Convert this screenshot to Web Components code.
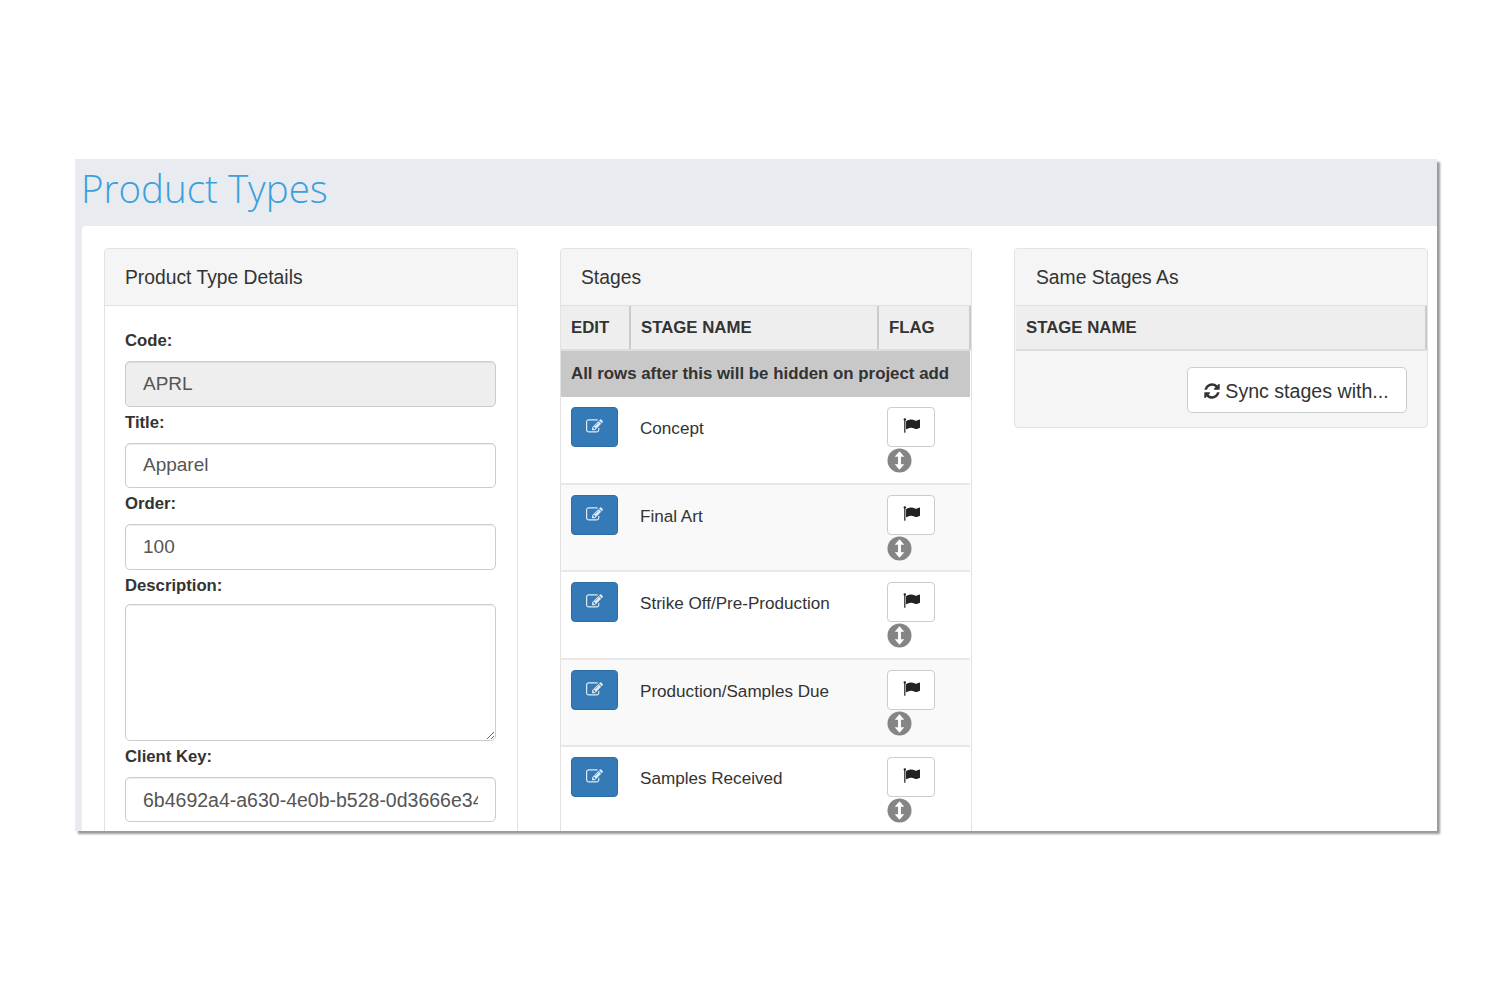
<!DOCTYPE html>
<html lang="en"><head><meta charset="utf-8"><title>Product Types</title>
<style>
html,body{margin:0;background:#fff}
body{padding:159px 0 0 75px;height:841px;box-sizing:border-box;overflow:hidden;font:19px/20px "Liberation Sans",Arial,sans-serif;color:#333}
</style></head><body>
<pt-window heading="Product Types">
  <pt-panel heading="Product Type Details">
    <pt-form>
      <pt-field label="Code:" value="APRL" disabled></pt-field>
      <pt-field label="Title:" value="Apparel"></pt-field>
      <pt-field label="Order:" value="100"></pt-field>
      <pt-field label="Description:" multiline></pt-field>
      <pt-field label="Client Key:" value="6b4692a4-a630-4e0b-b528-0d3666e34f21" wide></pt-field>
    </pt-form>
  </pt-panel>
  <pt-panel heading="Stages">
    <pt-table-head cols="70px 248px 92px" labels="EDIT|STAGE NAME|FLAG"></pt-table-head>
    <pt-notice>All rows after this will be hidden on project add</pt-notice>
    <pt-stage-row>Concept</pt-stage-row>
    <pt-stage-row alt>Final Art</pt-stage-row>
    <pt-stage-row>Strike Off/Pre-Production</pt-stage-row>
    <pt-stage-row alt>Production/Samples Due</pt-stage-row>
    <pt-stage-row>Samples Received</pt-stage-row>
  </pt-panel>
  <pt-panel heading="Same Stages As" filled indent="21">
    <pt-table-head cols="1fr" labels="STAGE NAME" inset></pt-table-head>
    <pt-sync-bar>Sync stages with...</pt-sync-bar>
  </pt-panel>
</pt-window>
<script>
const ICONS={
 edit:'M888 1184l116-116-152-152-116 116v56h96v96h56zm440-720q-16-16-33 1l-350 350q-17 17-1 33t33-1l350-350q17-17 1-33zm80 594v190q0 119-84.5 203.5t-203.5 84.5h-832q-119 0-203.5-84.5t-84.5-203.5v-832q0-119 84.5-203.5t203.5-84.5h832q63 0 117 25 15 7 18 23 3 17-9 29l-49 49q-14 14-32 8-23-6-45-6h-832q-66 0-113 47t-47 113v832q0 66 47 113t113 47h832q66 0 113-47t47-113v-126q0-13 9-22l64-64q15-15 35-7t20 29zm-96-738l288 288-672 672h-288v-288zm444 132l-92 92-288-288 92-92q28-28 68-28t68 28l152 152q28 28 28 68t-28 68z',
 flag:'M320 256q0 72-64 110v1266q0 13-9.5 22.5t-22.5 9.5h-64q-13 0-22.5-9.5t-9.5-22.5v-1266q-64-38-64-110 0-53 37.5-90.5t90.5-37.5 90.5 37.5 37.5 90.5zm1472 64v763q0 25-12.5 38.5t-39.5 27.5q-215 116-369 116-61 0-123.5-22t-108.5-48-115.5-48-142.5-22q-192 0-464 146-17 9-33 9-26 0-45-19t-19-45v-742q0-32 31-55 21-14 79-43 236-120 421-120 107 0 200 29t219 88q38 19 88 19 54 0 117.5-21t110-47 88-47 54.5-21q26 0 45 19t19 45z',
 sync:'M1639 1056q0 5-1 7-64 268-268 434.5t-478 166.5q-146 0-282.5-55t-243.5-157l-129 129q-19 19-45 19t-45-19-19-45v-448q0-26 19-45t45-19h448q26 0 45 19t19 45-19 45l-137 137q71 66 161 102t187 36q134 0 250-65t186-179q11-17 53-117 8-23 30-23h192q13 0 22.5 9.5t9.5 22.5zm25-800v448q0 26-19 45t-45 19h-448q-26 0-45-19t-19-45 19-45l138-138q-148-137-349-137-134 0-250 65t-186 179q-11 17-53 117-8 23-30 23h-199q-13 0-22.5-9.5t-9.5-22.5v-7q65-268 270-434.5t480-166.5q146 0 284 55.5t245 156.5l130-129q19-19 45-19t45 19 19 45z'
};
const icon=(n,s,c)=>`<svg width="${s}" height="${s}" viewBox="0 0 1792 1792" fill="${c}" aria-hidden="true"><path d="${ICONS[n]}"/></svg>`;
class Base extends HTMLElement{
  connectedCallback(){ if(!this.shadowRoot){ this.attachShadow({mode:'open'}).innerHTML=this.render(); } }
}
customElements.define('pt-window',class extends Base{render(){return `<style>
:host{display:block;width:1362px;height:672px;box-shadow:3px 3px 2px #9a9a9a}
.clip{height:100%;overflow:hidden;background:#e8ebef;display:flex;flex-direction:column}
h1{margin:0;height:67px;box-sizing:border-box;padding:3px 0 0 6px;font:300 38.5px/52px "Open Sans",sans-serif;color:#3d9fdc}
main{flex:1;min-height:0;margin-left:7px;background:#fff;border-radius:4px 0 0 0;padding:22px 9px 0 22px;display:grid;grid-template-columns:414px 412px 414px;column-gap:42px;align-items:start;overflow:hidden}
</style><div class="clip"><h1>${this.getAttribute('heading')}</h1><main><slot></slot></main></div>`}});
customElements.define('pt-panel',class extends Base{render(){const ind=this.getAttribute('indent')||20;return `<style>
:host{display:block;box-sizing:border-box;border:1px solid #e2e2e2;border-radius:4px;background:${this.hasAttribute('filled')?'#f5f5f5':'#fff'};min-height:0}
header{height:56.5px;box-sizing:border-box;padding:19px 20px 0 ${ind}px;background:#f5f5f5;border-bottom:1px solid #e2e2e2;border-radius:4px 4px 0 0;font-size:19.3px;line-height:20px;color:#333}
</style><header>${this.getAttribute('heading')}</header><slot></slot>`}});
customElements.define('pt-form',class extends Base{render(){return `<style>
:host{display:block;padding:25.5px 21px 30px 20px}
</style><slot></slot>`}});
customElements.define('pt-field',class extends Base{render(){
 const ml=this.hasAttribute('multiline'),dis=this.hasAttribute('disabled'),wide=this.hasAttribute('wide'),v=this.getAttribute('value')||'';
 return `<style>
:host{display:block;margin-bottom:6px}
label{display:block;font-weight:700;font-size:16.7px;line-height:20px;margin-bottom:${ml?'8px':'10px'};color:#333}
.box{box-sizing:border-box;width:370.5px;border:1px solid #ccc;border-radius:5px;background:${dis?'#eee':'#fff'};box-shadow:inset 0 1px 1px rgba(0,0,0,.075)}
.in{height:45.5px;padding:${wide?'2px':'0'} 17px 0;display:flex;align-items:center;color:#555;font-size:${wide?'19.5px':'19px'}}
.in span{display:block;width:100%;overflow:hidden;white-space:nowrap}
textarea{display:block;height:137px;margin:0;padding:8px 17px;font:inherit;color:#555;outline:none;resize:vertical}
</style><label>${this.getAttribute('label')}</label>${ml?'<textarea class="box" aria-label="Description"></textarea>':`<div class="box in"><span>${v}</span></div>`}`}});
customElements.define('pt-table-head',class extends Base{render(){
 const labels=this.getAttribute('labels').split('|');
 return `<style>
:host{display:block;padding:0 0 0 ${this.hasAttribute('inset')?'1px':'0'}}
.row{display:grid;grid-template-columns:${this.getAttribute('cols')};height:45.5px;box-sizing:border-box;background:#eee;border-bottom:2px solid #ddd}
.row div{box-sizing:border-box;padding:12px 10px 0;font-weight:700;font-size:16.8px;line-height:20px;color:#333;border-right:2px solid #ccc}
</style><div class="row">${labels.map(l=>`<div>${l}</div>`).join('')}</div>`}});
customElements.define('pt-notice',class extends Base{render(){return `<style>
:host{display:block;height:46px;box-sizing:border-box;padding:13px 10px 0;background:#c8c8c8;font-weight:700;font-size:16.85px;line-height:20px;color:#333;margin-right:1px}
</style><slot></slot>`}});
customElements.define('pt-stage-row',class extends Base{render(){return `<style>
:host{display:grid;grid-template-columns:69px 247px 1fr;height:87.6px;box-sizing:border-box;padding-top:10px;border-bottom:2px solid #e8e8e8;background:${this.hasAttribute('alt')?'#f9f9f9':'#fff'};margin-right:1px}
.edit{width:47px;height:40px;margin-left:10px;border-radius:4px;background:#337ab7;border:1px solid #2e6da4;box-sizing:border-box;display:flex;justify-content:center;padding-top:10px}
.edit svg{display:block}
.name{padding:12px 0 0 10px;font-size:17.1px;line-height:20px;color:#333}
.act{padding-left:10px}
.flag{width:48px;height:40px;box-sizing:border-box;border:1px solid #ccc;border-radius:4px;background:#fff;display:flex;justify-content:center;padding:9px 0 0 1px}
.flag svg{display:block}
.sort{display:block;margin-top:1px}
</style><div><div class="edit">${icon('edit',17,'#dfeaf4')}</div></div><div class="name"><slot></slot></div>
<div class="act"><div class="flag">${icon('flag',17,'#222')}</div>
<svg class="sort" width="25" height="25" viewBox="0 0 26 26" aria-hidden="true"><circle cx="13" cy="13" r="12.5" fill="#858585"/><path d="M13 7v12" stroke="#fff" stroke-width="3"/><path d="M13 3.5 18 9H8zM13 22.5 8 17h10z" fill="#fff"/></svg></div>`}});
customElements.define('pt-sync-bar',class extends Base{render(){return `<style>
:host{display:flex;justify-content:flex-end;padding:16px 20px 14px 0}
.btn{width:220px;height:46px;box-sizing:border-box;background:#fff;border:1px solid #ccc;border-radius:5px;display:flex;align-items:center;justify-content:center;gap:4px;padding:1px 2px 0 0;font-size:19.6px;color:#333}
</style><div class="btn">${icon('sync',18,'#333')}<span><slot></slot></span></div>`}});
</script>
</body></html>
